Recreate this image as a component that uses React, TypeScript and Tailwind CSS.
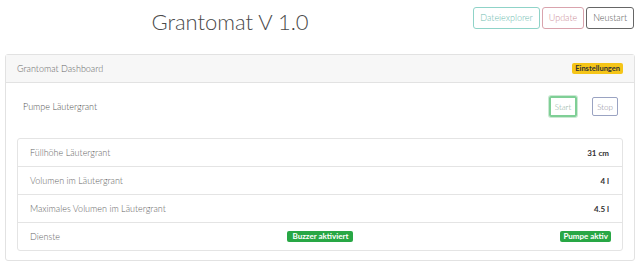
import React from 'react';

const rows = [
  { label: 'Füllhöhe Läutergrant', value: '31 cm' },
  { label: 'Volumen im Läutergrant', value: '4 l' },
  { label: 'Maximales Volumen im Läutergrant', value: '4.5 l' },
];

const App: React.FC = () => {
  return (
    <div className="w-[640px] h-[268px] bg-white text-[#555] font-['Lato',sans-serif] font-light">
      {/* top bar */}
      <div className="flex items-start h-[54px]">
        <div className="w-[460px] pt-[8px] text-center text-[22px] leading-[28px] text-[#4a4a4a] font-light">
          Grantomat V 1.0
        </div>
        <div className="flex-1 flex justify-end gap-[2px] pt-[7px] pr-[6px]">
          <button className="h-[22px] px-[6px] text-[9px] rounded-[3px] border border-[#8fd3c8] text-[#6dbcb0]">
            Dateiexplorer
          </button>
          <button className="h-[22px] px-[6px] text-[9px] rounded-[3px] border border-[#d9a3ad] text-[#cc8c97]">
            Update
          </button>
          <button className="h-[22px] px-[6px] text-[9px] rounded-[3px] border border-[#666] text-[#555]">
            Neustart
          </button>
        </div>
      </div>

      {/* card */}
      <div className="mx-[5px] border border-[#e2e2e2] rounded-[3px] h-[207px]">
        <div className="h-[28px] bg-[#f7f7f7] border-b border-[#e2e2e2] flex items-center justify-between pl-[11px] pr-[11px]">
          <span className="text-[9px] text-[#666]">Grantomat Dashboard</span>
          <span className="bg-[#f5c518] text-[#333] font-bold text-[7.5px] px-[3px] h-[11px] leading-[11px] rounded-[2px]">
            Einstellungen
          </span>
        </div>

        <div className="px-[11px]">
          <div className="h-[55px] pb-[8px] flex items-center justify-between pl-[6px] pr-[5px]">
            <span className="text-[9px] text-[#555]">Pumpe Läutergrant</span>
            <div className="flex items-center gap-[15px]">
              <button className="w-[28px] h-[21px] text-[8px] text-[#8a9] rounded-[2px] border-2 border-[#7fcf96] shadow-[0_0_0_1px_#cbe9d3]">
                Start
              </button>
              <button className="w-[26px] h-[19px] text-[8px] text-[#889] rounded-[2px] border border-[#9aa3c2]">
                Stop
              </button>
            </div>
          </div>

          <div className="border border-[#e4e4e4] rounded-[3px]">
            {rows.map((r) => (
              <div key={r.label} className="h-[28px] flex items-center justify-between pl-[12px] pr-[13px] border-b border-[#e4e4e4]">
                <span className="text-[9px] text-[#666]">{r.label}</span>
                <span className="text-[8px] font-bold text-[#333]">{r.value}</span>
              </div>
            ))}
            <div className="h-[27px] grid grid-cols-3 items-center pl-[12px] pr-[11px]">
              <span className="text-[9px] text-[#666]">Dienste</span>
              <div className="flex justify-center">
                <span className="bg-[#28a745] text-white font-bold text-[8px] px-[5px] h-[11px] leading-[11px] rounded-[2px]">
                  Buzzer aktiviert
                </span>
              </div>
              <div className="flex justify-end">
                <span className="bg-[#28a745] text-white font-bold text-[8px] px-[3px] h-[11px] leading-[11px] rounded-[2px]">
                  Pumpe aktiv
                </span>
              </div>
            </div>
          </div>
        </div>
      </div>
    </div>
  );
};

export default App;
